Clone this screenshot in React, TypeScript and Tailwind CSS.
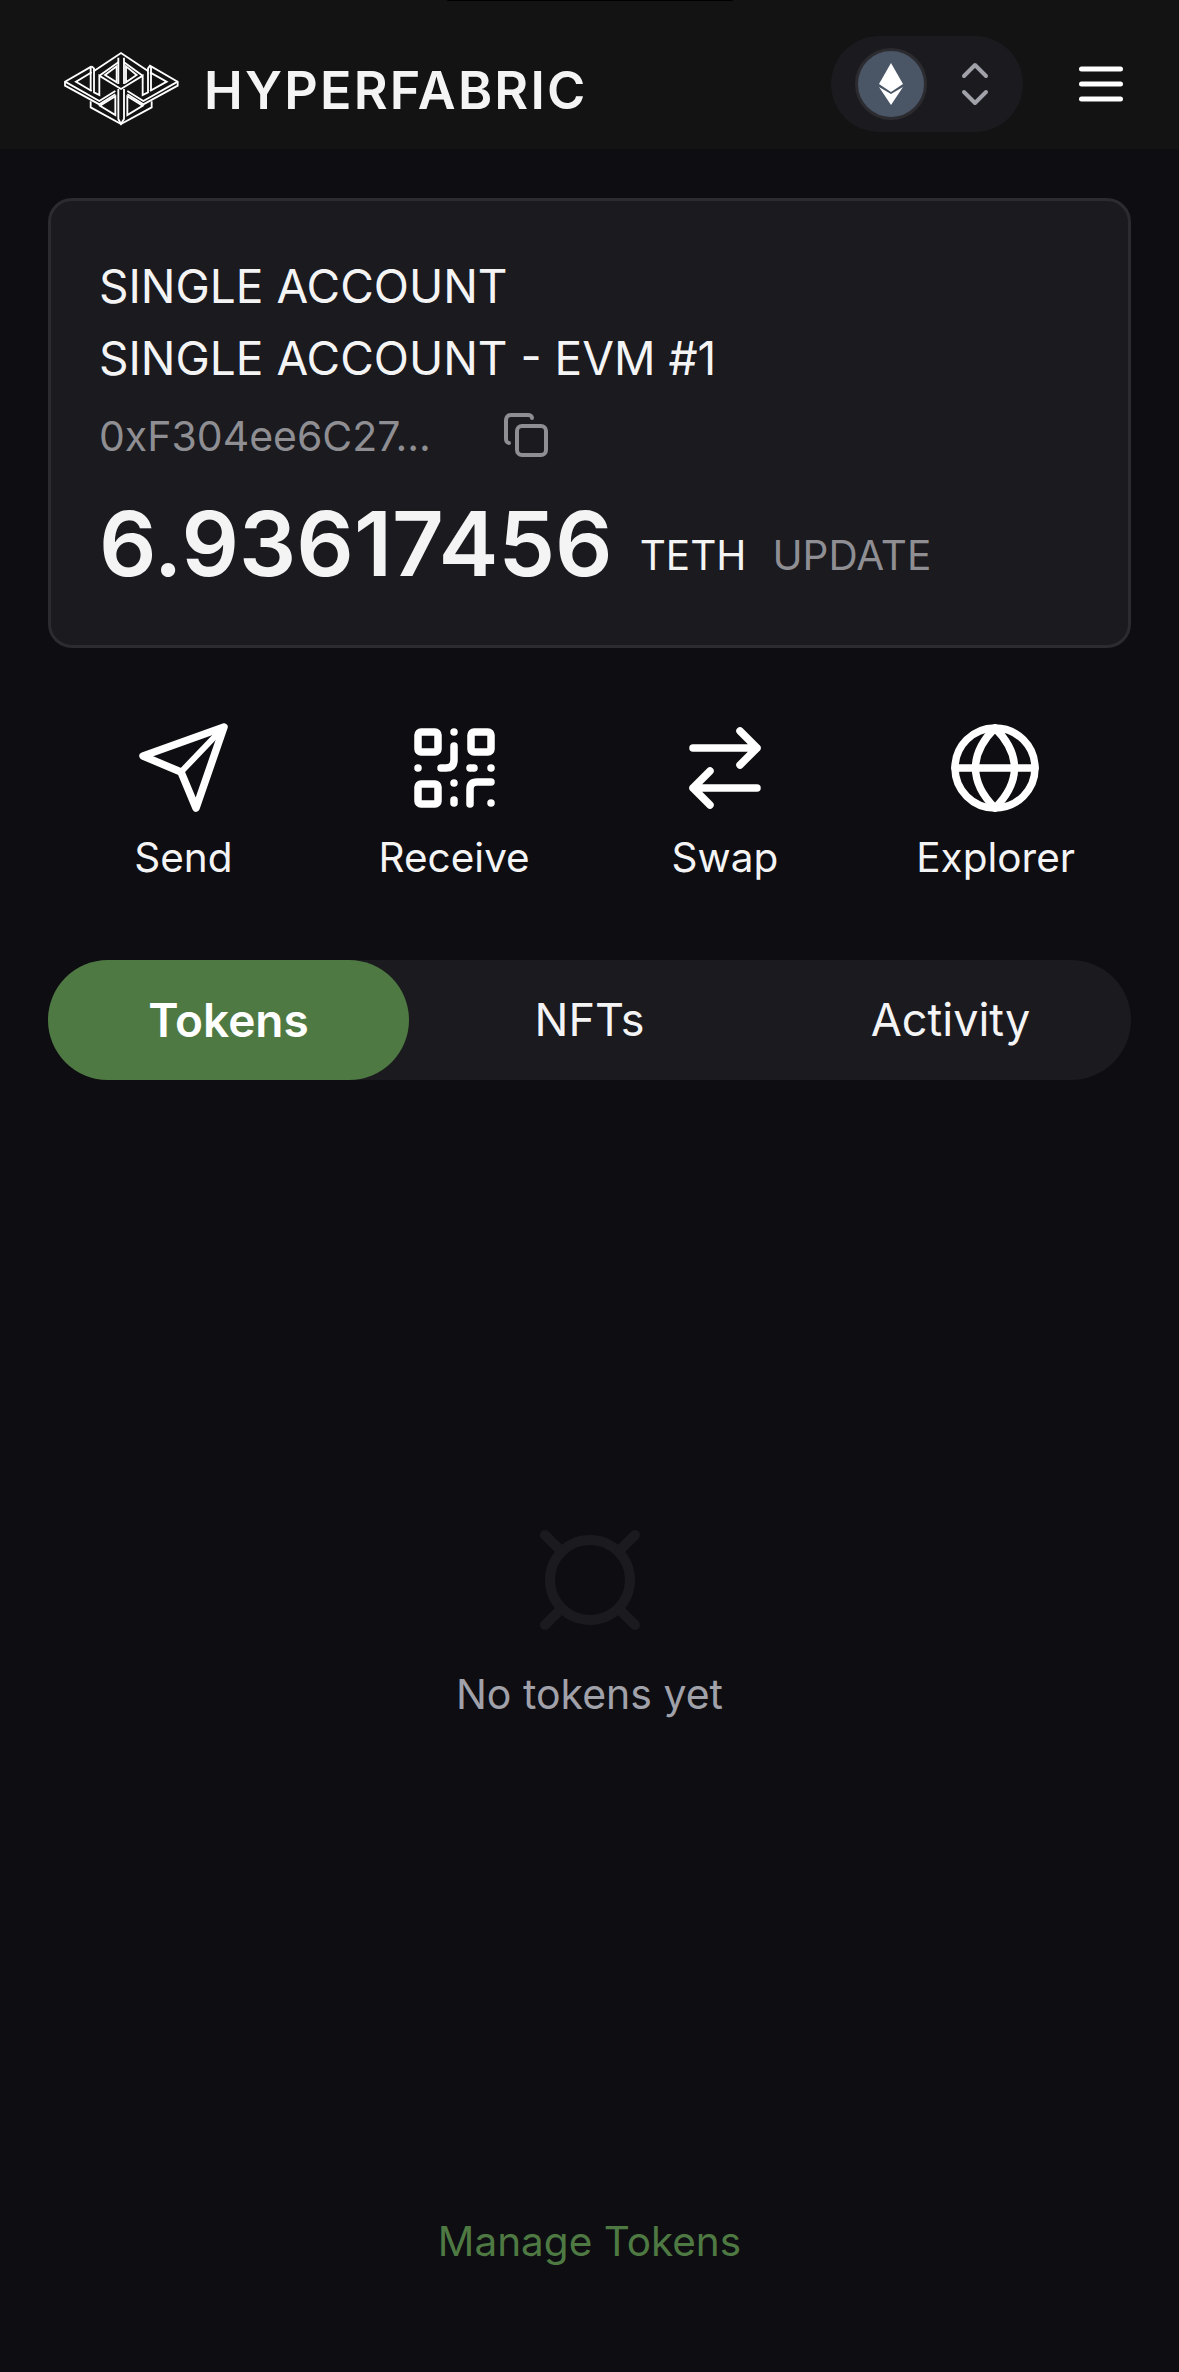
import React from "react";

function Logo() {
  return (
    <svg width="150" height="100" viewBox="0 0 450 300" fill="none" stroke="#ffffff" strokeWidth="5.5" strokeLinejoin="miter" className="block">
      <path d="M125 82 L45 128 V140 L148 196 L196 166" />
      <path d="M45 128 L148 186 L196 156" />
      <path d="M125 100 L78 128 L125 156" />
      <path d="M125 82 L132 88 V160 L148 168 V110 L213 150 L278 110 V168 L294 160 V88 L300 80 L383 128 V140 L280 196 L232 166" />
      <path d="M383 128 L280 186 L232 156" />
      <path d="M300 100 L350 128 L300 156" />
      <path d="M122 82 V156 M303 82 V156" />
      <path d="M132 96 L213 42 L294 96" />
      <path d="M148 110 L205 70 M278 110 L222 70" />
      <path d="M205 135 V56 M222 135 V56" />
      <path d="M165 108 L200 82 V130 Z M260 108 L228 82 V130 Z" />
      <path d="M205 150 V240 L213 255 L222 240 V150" />
      <path d="M122 187 V205 L213 255 L305 205 V187" />
      <path d="M196 172 L150 200 L196 228 Z M232 172 L278 200 L232 228 Z" />
    </svg>
  );
}

function SendIcon() {
  return (
    <svg width="96" height="96" viewBox="0 0 96 96" fill="none" stroke="#fff" strokeWidth="7.5" strokeLinecap="round" strokeLinejoin="round">
      <path d="M89 11 L8 40 L46 56 L61 92 Z" />
      <path d="M46 56 L89 11" strokeWidth="6" />
    </svg>
  );
}

function QrIcon() {
  return (
    <svg width="96" height="96" viewBox="0 0 96 96" fill="none" stroke="#fff" strokeWidth="7.5" strokeLinecap="round" strokeLinejoin="round">
      <rect x="12" y="16" width="20" height="20" rx="3" />
      <rect x="65" y="16" width="20" height="20" rx="3" />
      <rect x="12" y="68" width="20" height="20" rx="3" />
      <path d="M48 16 V16.1" />
      <path d="M48 30 V44 Q48 52 40 52 H35" />
      <path d="M12 52 V52.1" />
      <path d="M64 52 H68" />
      <path d="M85 52 V52.1" />
      <path d="M48 67 V67.1" />
      <path d="M48 84 V87" />
      <path d="M64 88 V73 Q64 66 71 66 H85" />
      <path d="M85 87 V87.1" />
    </svg>
  );
}

function SwapIcon() {
  return (
    <svg width="96" height="96" viewBox="0 0 96 96" fill="none" stroke="#fff" strokeWidth="7.5" strokeLinecap="round" strokeLinejoin="round">
      <path d="M16 32 H80 M63 15 L80 32 L63 49" />
      <path d="M80 72 H16 M33 55 L16 72 L33 89" />
    </svg>
  );
}

function GlobeIcon() {
  return (
    <svg width="96" height="96" viewBox="0 0 96 96" fill="none" stroke="#fff" strokeWidth="7.5" strokeLinecap="round" strokeLinejoin="round">
      <circle cx="47" cy="52" r="40" />
      <path d="M7 52 H87" />
      <path d="M47 12 C21 38 21 66 47 92 C73 66 73 38 47 12 Z" />
    </svg>
  );
}

function CurrencyIcon() {
  return (
    <svg width="120" height="120" viewBox="0 0 24 24" fill="none" stroke="#1a1a1f" strokeWidth="2" strokeLinecap="round" strokeLinejoin="round">
      <circle cx="12" cy="12" r="8" />
      <path d="M3 3 L6 6 M21 3 L18 6 M3 21 L6 18 M21 21 L18 18" />
    </svg>
  );
}

function EthIcon() {
  return (
    <svg width="24" height="42" viewBox="0 0 24 42" fill="#fff" className="block">
      <path d="M12 0 L24 21 L12 29 L0 21 Z" />
      <path d="M0 24 L12 31 L24 24 L12 42 Z" />
    </svg>
  );
}

function Action({ icon, label }: { icon: React.ReactNode; label: string }) {
  return (
    <div className="flex flex-col items-center">
      {icon}
      <div className="mt-[16px] text-[40.5px] leading-[60px] text-[#f4f4f5]">{label}</div>
    </div>
  );
}

export default function App() {
  return (
    <div
      className="relative flex h-[2372px] w-[1179px] flex-col overflow-hidden bg-[#0d0d12] text-[#f4f4f5]"
      style={{ fontFamily: "Inter, 'Liberation Sans', sans-serif" }}
    >
      <div className="absolute left-[447px] top-0 h-[1px] w-[286px] rounded-b-sm bg-black" />
      <header className="flex h-[149px] shrink-0 items-center bg-[#131313] pl-[50px] pr-[56px] pt-[19px]">
        <div className="mt-[10px] flex items-center">
          <Logo />
          <div className="ml-[4px] mt-[3px] text-[52px] font-semibold leading-none tracking-[2.2px] text-[#f4f4f4]">HYPERFABRIC</div>
        </div>
        <div className="ml-auto flex h-[96px] w-[192px] items-center rounded-full bg-[#1a1a1f] pl-[24px]">
          <div className="flex h-[72px] w-[72px] items-center justify-center rounded-full border-[3px] border-[#2b2b30] bg-[#4a5565]">
            <EthIcon />
          </div>
          <svg width="32" height="44" viewBox="0 0 32 44" fill="none" stroke="#a1a1aa" strokeWidth="4" strokeLinecap="round" strokeLinejoin="round" className="ml-[32px]">
            <path d="M5 14 L16 3 L27 14" />
            <path d="M5 30 L16 41 L27 30" />
          </svg>
        </div>
        <svg width="44" height="36" viewBox="0 0 44 36" fill="none" stroke="#fff" strokeWidth="5" strokeLinecap="round" className="ml-[56px]">
          <path d="M2.5 3 H41.5 M2.5 18 H41.5 M2.5 33 H41.5" />
        </svg>
      </header>

      <main className="flex flex-1 flex-col px-[48px]">
        <section className="mt-[49px] h-[450px] rounded-[24px] border-[3px] border-[#2b2b30] bg-[#1a1a1f] pl-[48px] pt-[49px]">
          <div className="text-[46px] leading-[72px] text-[#f4f4f5]">SINGLE ACCOUNT</div>
          <div className="text-[46px] leading-[72px] text-[#f4f4f5]">SINGLE ACCOUNT - EVM #1</div>
          <div className="mt-[12px] flex h-[60px] items-center">
            <span className="text-[41px] leading-[60px] text-[#8e8e93]">0xF304ee6C27...</span>
            <svg width="46" height="46" viewBox="0 0 46 46" fill="none" stroke="#8e8e93" strokeWidth="4" strokeLinecap="round" strokeLinejoin="round" className="mb-[2px] ml-[72px]">
              <rect x="14" y="14" width="29" height="29" rx="5" />
              <path d="M6 31 C4 31 3 29 3 27 V8 C3 5 5 3 8 3 H25 C27 3 29 4 29 6" />
            </svg>
          </div>
          <div className="mt-[25px] flex items-baseline">
            <span className="text-[90px] font-semibold leading-[106px] text-[#f4f4f5]">6.93617456</span>
            <span className="ml-[27px] -translate-y-[6px] text-[40.5px] leading-[60px] text-[#f4f4f5]">TETH</span>
            <span className="ml-[26px] -translate-y-[6px] text-[40.5px] leading-[60px] text-[#8e8e93]">UPDATE</span>
          </div>
        </section>

        <section className="mt-[68px] grid grid-cols-4">
          <Action icon={<SendIcon />} label="Send" />
          <Action icon={<QrIcon />} label="Receive" />
          <Action icon={<SwapIcon />} label="Swap" />
          <Action icon={<GlobeIcon />} label="Explorer" />
        </section>

        <section className="mt-[72px] grid h-[120px] grid-cols-3 rounded-full bg-[#1a1a1f] text-[45px]">
          <div className="flex items-center justify-center rounded-full bg-[#4f7942] text-[46px] font-semibold text-white">Tokens</div>
          <div className="flex items-center justify-center text-[#f4f4f5]">NFTs</div>
          <div className="flex items-center justify-center text-[#f4f4f5]">Activity</div>
        </section>

        <section className="mt-[440px] flex flex-col items-center">
          <CurrencyIcon />
          <div className="mt-[24px] text-[41px] leading-[60px] text-[#a1a1aa]">No tokens yet</div>
        </section>

        <div className="mt-auto pb-[100px] text-center text-[40.5px] leading-[60px] text-[#4f7942]">Manage Tokens</div>
      </main>
    </div>
  );
}
